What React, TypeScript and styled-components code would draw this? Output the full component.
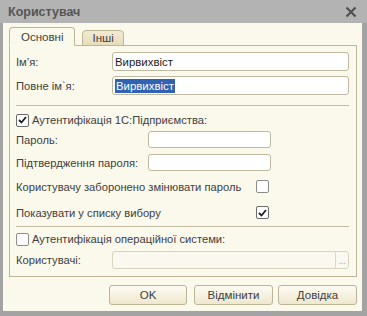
import React from 'react';
import styled, { createGlobalStyle } from 'styled-components';

const GlobalStyle = createGlobalStyle`
  html, body {
    margin: 0;
    padding: 0;
    background: #ffffff;
  }
  body {
    font-family: 'Liberation Sans', Arial, sans-serif;
    font-size: 11.2px;
    color: #404040;
  }
`;

export default function App(): JSX.Element {
  return (
    <>
      <GlobalStyle />
      <Window>
        <TitleBar>
          <Title>Користувач</Title>
          <CloseButton>
            <svg width="12" height="12" viewBox="0 0 12 12">
              <path d="M1.5 1.5 L10.5 10.5 M10.5 1.5 L1.5 10.5" stroke="#505050" strokeWidth="2.2" />
            </svg>
          </CloseButton>
        </TitleBar>
        <Body>
          <Tabs>
            <Tab $active>Основні</Tab>
            <Tab>Інші</Tab>
          </Tabs>
          <Panel>
            <Row $top={0} $h={19}>
              <Label $w={96}>Ім’я:</Label>
              <Input $w={237}>Вирвихвіст</Input>
            </Row>
            <Row $top={5} $h={19}>
              <Label $w={96}>Повне ім`я:</Label>
              <Input $w={237}>
                <Selected>Вирвихвіст</Selected>
              </Input>
            </Row>
            <Separator $top={10} />
            <Row $top={7} $h={14}>
              <CheckBox $checked />
              <CheckLabel>Аутентифікація 1С:Підприємства:</CheckLabel>
            </Row>
            <Row $top={4} $h={17}>
              <Label $w={132}>Пароль:</Label>
              <Input $w={123} />
            </Row>
            <Row $top={6} $h={17}>
              <Label $w={132}>Підтвердження пароля:</Label>
              <Input $w={123} />
            </Row>
            <Row $top={9} $h={13}>
              <Label $w={240}>Користувачу заборонено змінювати пароль</Label>
              <CheckBox />
            </Row>
            <Row $top={13} $h={13}>
              <Label $w={240}>Показувати у списку вибору</Label>
              <CheckBox $checked />
            </Row>
            <Separator $top={7} />
            <Row $top={5} $h={14}>
              <CheckBox />
              <CheckLabel>Аутентифікація операційної системи:</CheckLabel>
            </Row>
            <Row $top={5} $h={18}>
              <Label $w={96}>Користувачі:</Label>
              <Input $w={237} $disabled>
                <Spacer />
                <DotsButton>...</DotsButton>
              </Input>
            </Row>
          </Panel>
          <Buttons>
            <Button $w={78}>OK</Button>
            <Button $w={79} $left={7}>Відмінити</Button>
            <Button $w={79} $left={5}>Довідка</Button>
          </Buttons>
        </Body>
      </Window>
    </>
  );
}

const Window = styled.div`
  width: 367px;
  height: 316px;
  display: flex;
  flex-direction: column;
  box-sizing: border-box;
  background: #a3a3a3;
`;

const TitleBar = styled.div`
  height: 23px;
  flex: none;
  display: flex;
  align-items: center;
  justify-content: space-between;
  padding: 0 10px 0 8px;
  background: #b3b3b3;
`;

const Title = styled.div`
  font-weight: bold;
  font-size: 12.5px;
  color: #555555;
`;

const CloseButton = styled.div`
  width: 12px;
  height: 12px;
  display: flex;
`;

const Body = styled.div`
  flex: 1;
  margin: 0 5px 5px 3px;
  padding: 4px 5px 0 6px;
  background: #fbf9ec;
  display: flex;
  flex-direction: column;
`;

const Tabs = styled.div`
  display: flex;
  align-items: flex-end;
  gap: 7px;
  height: 19px;
  margin-bottom: -1px;
  position: relative;
  z-index: 1;
`;

const Tab = styled.div<{ $active?: boolean }>`
  height: ${(p) => (p.$active ? 19 : 16)}px;
  padding: 0 ${(p) => (p.$active ? 11 : 9)}px;
  box-sizing: border-box;
  display: flex;
  align-items: center;
  border: 1px solid #bdb596;
  border-bottom: ${(p) => (p.$active ? '1px solid #fbf9ec' : '1px solid #bdb596')};
  border-radius: 4px 4px 0 0;
  background: ${(p) => (p.$active ? '#fbf9ec' : 'linear-gradient(#f1ebd2, #e6ddbb)')};
  color: #404040;
  font-size: 11.5px;
`;

const Panel = styled.div`
  height: 232px;
  box-sizing: border-box;
  border: 1px solid #bdb596;
  padding: 6px 7px 0 6px;
  display: flex;
  flex-direction: column;
`;

const Row = styled.div<{ $top: number; $h: number }>`
  display: flex;
  align-items: center;
  margin-top: ${(p) => p.$top}px;
  height: ${(p) => p.$h}px;
  flex: none;
`;

const Label = styled.div<{ $w: number }>`
  width: ${(p) => p.$w}px;
  flex: none;
  white-space: nowrap;
`;

const CheckLabel = styled.div`
  margin-left: 3px;
  white-space: nowrap;
`;

const Input = styled.div<{ $w: number; $disabled?: boolean }>`
  width: ${(p) => p.$w}px;
  height: 100%;
  box-sizing: border-box;
  border: 1px solid ${(p) => (p.$disabled ? '#d9d3bd' : '#bfb9a1')};
  border-radius: 3px;
  background: ${(p) => (p.$disabled ? '#faf8ef' : '#ffffff')};
  padding: 0 0 0 2px;
  display: flex;
  align-items: center;
  color: #1e1e1e;
  font-size: 11.4px;
`;

const Selected = styled.span`
  background: #3063b2;
  color: #ffffff;
  padding: 0 1px;
  line-height: 14px;
`;

const Spacer = styled.div`
  flex: 1;
`;

const DotsButton = styled.div`
  width: 13px;
  height: 100%;
  box-sizing: border-box;
  border-left: 1px solid #ddd7c3;
  display: flex;
  align-items: flex-end;
  justify-content: center;
  padding-bottom: 2px;
  color: #b7b09a;
  font-size: 10px;
  letter-spacing: -0.5px;
`;

const Separator = styled.div<{ $top: number }>`
  margin-top: ${(p) => p.$top}px;
  height: 1px;
  background: #c3bca2;
  flex: none;
`;

function CheckBox({ $checked }: { $checked?: boolean }): JSX.Element {
  return (
    <Box $checked={$checked}>
      {$checked && (
        <svg width="9" height="8" viewBox="0 0 9 8">
          <path d="M1 4 L3.5 6.5 L8 1" stroke="#1e1e1e" strokeWidth="1.8" fill="none" />
        </svg>
      )}
    </Box>
  );
}

const Box = styled.div<{ $checked?: boolean }>`
  width: 13px;
  height: 13px;
  box-sizing: border-box;
  flex: none;
  border: 1px solid ${(p) => (p.$checked ? '#6b6b6b' : '#8c8c8c')};
  border-radius: 2px;
  background: #ffffff;
  display: flex;
  align-items: center;
  justify-content: center;
`;

const Buttons = styled.div`
  flex: 1;
  display: flex;
  align-items: flex-start;
  justify-content: flex-end;
  padding-top: 8px;
`;

const Button = styled.div<{ $w: number; $left?: number }>`
  width: ${(p) => p.$w}px;
  height: 20px;
  margin-left: ${(p) => p.$left ?? 0}px;
  box-sizing: border-box;
  border: 1px solid #bdb596;
  border-radius: 3px;
  background: linear-gradient(#fdfbf2, #efe8ce);
  display: flex;
  align-items: center;
  justify-content: center;
  color: #404040;
  font-size: 11.5px;
`;
